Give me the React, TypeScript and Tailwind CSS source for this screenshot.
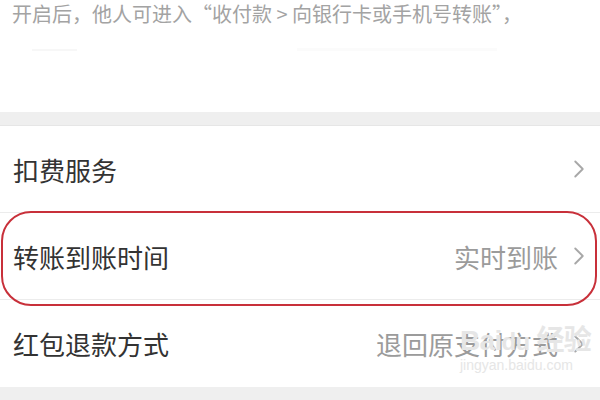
import { ChevronRight } from "lucide-react";

const FONT = { fontFamily: '"Noto Sans CJK SC", "Noto Sans", sans-serif' };

const ROWS = [
  { label: "扣费服务", value: "" },
  { label: "转账到账时间", value: "实时到账", marked: true },
  { label: "红包退款方式", value: "退回原支付方式" },
];

export default function App() {
  return (
    <div className="w-[600px] h-[400px] overflow-hidden bg-white relative" style={FONT}>
      {/* note at the top, cut off by the screenshot */}
      <div className="h-[112px] bg-white px-[12px]">
        <p className="text-[20px] leading-[28px] text-[#a3a3a3] whitespace-nowrap">
          开启后，他人可进入“收付款 &gt; 向银行卡或手机号转账”，
        </p>
        <div className="flex items-center mt-[20px] opacity-30">
          <div className="w-[45px] h-[2px] bg-[#e5e5e5] ml-[20px]" />
          <div className="w-[200px] h-[3px] bg-[#f2f2f2] ml-[220px]" />
        </div>
      </div>

      <div className="h-[14px] bg-[#efefef] border-b border-[#e6e6e6]" />

      <div className="bg-white">
        {ROWS.map((r, i) => (
          <div
            key={r.label}
            className={`relative h-[87px] flex items-center pl-[13px] pr-[10px] ${
              i < ROWS.length - 1 ? "border-b border-[#ececec]" : ""
            }`}
          >
            <span className="text-[26px] text-[#333] flex-1">{r.label}</span>
            {r.value && <span className="text-[26px] text-[#9b9b9b] mr-[6px]">{r.value}</span>}
            <ChevronRight size={30} strokeWidth={1.5} className="text-[#a8a8a8] -mr-[4px]" />
            {r.marked && (
              <div className="absolute left-[1px] right-[3px] -top-[2px] -bottom-[7px] rounded-[30px] border-2 border-[#c8303a]" />
            )}
          </div>
        ))}
      </div>

      <div className="h-[14px] bg-[#efefef]" />

      {/* watermark */}
      <div className="absolute left-[460px] top-[327px] text-[#e6e6e6] pointer-events-none leading-none whitespace-nowrap">
        <div className="text-[28px] font-bold tracking-tight" style={{ fontFamily: '"Liberation Sans", "Noto Sans CJK SC", sans-serif' }}>
          Bai<span className="text-[24px]">du</span> 经验
        </div>
        <div className="text-[14px] mt-[3px]" style={{ fontFamily: '"Liberation Sans", sans-serif' }}>
          jingyan.baidu.com
        </div>
      </div>
    </div>
  );
}
